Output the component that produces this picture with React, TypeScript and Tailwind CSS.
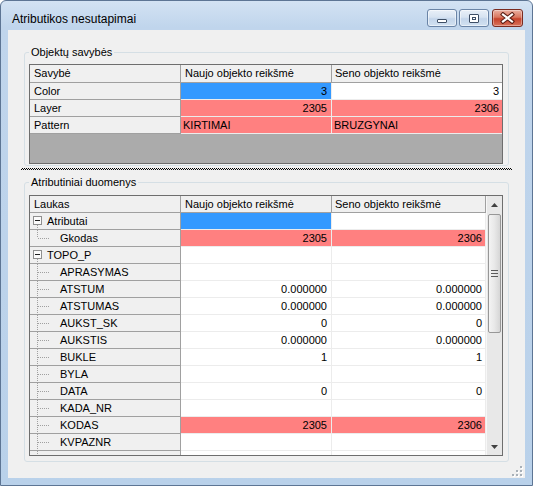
import React from 'react'

type PropRow = {
  name: string
  next: string
  prev: string
  nextBg: string
  prevBg: string
  right: boolean
}

const PINK = 'bg-[#ff8080]'
const BLUE = 'bg-[#3399ff]'

const propRows: PropRow[] = [
  { name: 'Color', next: '3', prev: '3', nextBg: BLUE, prevBg: 'bg-white', right: true },
  { name: 'Layer', next: '2305', prev: '2306', nextBg: PINK, prevBg: PINK, right: true },
  { name: 'Pattern', next: 'KIRTIMAI', prev: 'BRUZGYNAI', nextBg: PINK, prevBg: PINK, right: false },
]

type AttrRow = {
  label: string
  group?: boolean
  last?: boolean
  next?: string
  prev?: string
  nextBg?: string
  prevBg?: string
}

const attrRows: AttrRow[] = [
  { label: 'Atributai', group: true, nextBg: BLUE },
  { label: 'Gkodas', last: true, next: '2305', prev: '2306', nextBg: PINK, prevBg: PINK },
  { label: 'TOPO_P', group: true },
  { label: 'APRASYMAS' },
  { label: 'ATSTUM', next: '0.000000', prev: '0.000000' },
  { label: 'ATSTUMAS', next: '0.000000', prev: '0.000000' },
  { label: 'AUKST_SK', next: '0', prev: '0' },
  { label: 'AUKSTIS', next: '0.000000', prev: '0.000000' },
  { label: 'BUKLE', next: '1', prev: '1' },
  { label: 'BYLA' },
  { label: 'DATA', next: '0', prev: '0' },
  { label: 'KADA_NR' },
  { label: 'KODAS', next: '2305', prev: '2306', nextBg: PINK, prevBg: PINK },
  { label: 'KVPAZNR' },
  { label: 'MEDZIAGA' },
]

function CaptionButton({ kind }: { kind: 'min' | 'max' | 'close' }) {
  if (kind === 'close') {
    return (
      <div className="flex h-[18px] w-[31px] items-center justify-center rounded-[3px] border border-[#7a2b20] bg-[linear-gradient(#eab0a2,#d9765f_45%,#c6422b_55%,#d8745c)] shadow-[inset_0_0_0_1px_rgba(255,255,255,0.35)]">
        <svg width="15" height="12" viewBox="0 0 15 12">
          <path d="M3 2.5 L12 9.5 M12 2.5 L3 9.5" stroke="#5a1d14" strokeWidth="4.2" strokeLinecap="square" />
          <path d="M3 2.5 L12 9.5 M12 2.5 L3 9.5" stroke="#ffffff" strokeWidth="2.2" strokeLinecap="square" />
        </svg>
      </div>
    )
  }
  return (
    <div className="flex h-[18px] w-[30px] items-center justify-center rounded-[3px] border border-[#6a84a6] bg-[linear-gradient(#e9f0f8,#d7e3f1_45%,#c3d5ea_55%,#d2e1f1)] shadow-[inset_0_0_0_1px_rgba(255,255,255,0.5)]">
      {kind === 'min' ? (
        <div className="mt-[5px] h-[4px] w-[10px] rounded-[1px] border border-[#3e4f66] bg-white" />
      ) : (
        <div className="flex h-[9px] w-[10px] items-center justify-center rounded-[1px] border border-[#3e4f66] bg-white">
          <div className="h-[3px] w-[4px] border border-[#3e4f66]" />
        </div>
      )}
    </div>
  )
}

function TitleBar() {
  return (
    <div className="flex h-[29px] shrink-0 items-start justify-between pl-[11px] pr-[9px]">
      <div className="pt-[11px] text-[12px] leading-[15px]">Atributikos nesutapimai</div>
      <div className="mt-[8px] flex">
        <CaptionButton kind="min" />
        <div className="ml-[2px]">
          <CaptionButton kind="max" />
        </div>
        <div className="ml-[3px]">
          <CaptionButton kind="close" />
        </div>
      </div>
    </div>
  )
}

function TreeGlyph({ group, last }: { group?: boolean; last?: boolean }) {
  if (group) {
    return (
      <svg width="17" height="16" className="shrink-0">
        <rect x="3.5" y="3.5" width="8" height="8" fill="#fbfbfb" stroke="#8f8f8f" />
        <rect x="5" y="7" width="5" height="1" fill="#1e1e1e" />
        <line x1="7.5" y1="12" x2="7.5" y2="16" stroke="#a0a0a0" strokeDasharray="1 1" />
      </svg>
    )
  }
  return (
    <svg width="30" height="16" className="shrink-0">
      <line x1="7.5" y1="0" x2="7.5" y2={last ? 8 : 16} stroke="#a0a0a0" strokeDasharray="1 1" />
      <line x1="8" y1="8.5" x2="20" y2="8.5" stroke="#a0a0a0" strokeDasharray="1 1" />
    </svg>
  )
}

function ScrollBar() {
  return (
    <div className="flex w-[16px] shrink-0 flex-col border-l border-[#f7f7f7] bg-[#e8e8e8]">
      <div className="flex h-[17px] shrink-0 items-center justify-center">
        <svg width="7" height="4">
          <path d="M3.5 0 L7 4 L0 4 Z" fill="#404040" />
        </svg>
      </div>
      <div className="mx-[1px] mt-[1px] flex h-[119px] shrink-0 items-center justify-center rounded-[2px] border border-[#979797] bg-[linear-gradient(90deg,#f4f4f4,#e8e8e8_50%,#d6d6d6)]">
        <svg width="7" height="7">
          <rect x="0" y="0" width="7" height="1" fill="#5a5a5a" />
          <rect x="0" y="3" width="7" height="1" fill="#5a5a5a" />
          <rect x="0" y="6" width="7" height="1" fill="#5a5a5a" />
        </svg>
      </div>
      <div className="flex-1" />
      <div className="flex h-[17px] shrink-0 items-center justify-center">
        <svg width="7" height="4">
          <path d="M0 0 L7 0 L3.5 4 Z" fill="#404040" />
        </svg>
      </div>
    </div>
  )
}

function PropertiesGrid() {
  return (
    <div className="w-[474px] border border-[#6e6e6e] bg-[#ababab]">
      <div className="flex h-[18px] bg-[#f0f0f0] leading-[17px]">
        <div className="w-[151px] border-b border-r border-[#a0a0a0] pl-[4px]">Savybė</div>
        <div className="w-[151px] border-b border-r border-[#a0a0a0] pl-[4px]">Naujo objekto reikšmė</div>
        <div className="flex-1 border-b border-[#a0a0a0] pl-[3px]">Seno objekto reikšmė</div>
      </div>
      {propRows.map(r => (
        <div key={r.name} className="flex h-[17px] leading-[16px]">
          <div className="w-[151px] border-b border-r border-[#a0a0a0] bg-[#f0f0f0] pl-[4px]">{r.name}</div>
          <div
            className={`w-[151px] border-b border-r border-[#ececec] ${r.nextBg} ${
              r.right ? 'pr-[4px] text-right' : 'pl-[2px]'
            }`}
          >
            {r.next}
          </div>
          <div className={`flex-1 border-b border-[#ececec] ${r.prevBg} ${r.right ? 'pr-[3px] text-right' : 'pl-[2px]'}`}>
            {r.prev}
          </div>
        </div>
      ))}
      <div className="h-[29px]" />
    </div>
  )
}

function AttributesGrid() {
  return (
    <div className="flex h-[261px] w-[474px] border border-[#6e6e6e] bg-white">
      <div className="flex flex-1 flex-col overflow-hidden">
        <div className="flex h-[17px] shrink-0 bg-[#f0f0f0] leading-[16px]">
          <div className="w-[151px] border-b border-r border-[#a0a0a0] pl-[4px]">Laukas</div>
          <div className="w-[151px] border-b border-r border-[#a0a0a0] pl-[4px]">Naujo objekto reikšmė</div>
          <div className="flex-1 border-b border-r border-[#a0a0a0] pl-[3px]">Seno objekto reikšmė</div>
        </div>
        {attrRows.map(r => (
          <div key={r.label} className="flex h-[17px] shrink-0 leading-[16px]">
            <div className="flex w-[151px] border-b border-r border-[#a0a0a0] bg-[#f0f0f0]">
              <TreeGlyph group={r.group} last={r.last} />
              <span>{r.label}</span>
            </div>
            <div className={`w-[151px] border-b border-r border-[#ececec] pr-[4px] text-right ${r.nextBg ?? 'bg-white'}`}>
              {r.next}
            </div>
            <div className={`flex-1 border-b border-r border-[#ececec] pr-[3px] text-right ${r.prevBg ?? 'bg-white'}`}>
              {r.prev}
            </div>
          </div>
        ))}
      </div>
      <ScrollBar />
    </div>
  )
}

function ResizeGrip() {
  const dots = [
    [8, 0],
    [4, 4],
    [8, 4],
    [0, 8],
    [4, 8],
    [8, 8],
  ]
  return (
    <svg width="11" height="11" className="absolute bottom-[1px] right-[2px]">
      {dots.map(([x, y]) => (
        <g key={`${x}-${y}`}>
          <rect x={x + 1} y={y + 1} width="2" height="2" fill="#ffffff" />
          <rect x={x} y={y} width="2" height="2" fill="#a8b0b8" />
        </g>
      ))}
    </svg>
  )
}

export default function App() {
  return (
    <div className="h-[486px] w-[533px] font-['Liberation_Sans',Arial,sans-serif] text-[11px] text-black">
      <div className="flex h-full flex-col rounded-t-[6px] border border-[#5d7594] bg-[linear-gradient(#d3e2f3,#c0d5ec_26px,#b9d1ea)]">
        <TitleBar />
        <div className="relative mx-[7px] flex h-[448px] flex-col bg-[#f0f0f0]">
          {/* Objektų savybės */}
          <fieldset className="mx-[16px] mt-[16px] rounded-[3px] border border-[#d5dfe5]">
            <legend className="ml-[4px] px-[2px] leading-[13px]">Objektų savybės</legend>
            <div className="pb-[1px] pl-[4px] pt-[5px]">
              <PropertiesGrid />
            </div>
          </fieldset>

          {/* splitter */}
          <div className="mx-[13px] mt-[2px] h-[2px] bg-[conic-gradient(#000_25%,transparent_0_50%,#000_0_75%,transparent_0)] bg-[length:2px_2px]" />

          {/* Atributiniai duomenys */}
          <fieldset className="mx-[16px] mt-[6px] rounded-[3px] border border-[#d5dfe5]">
            <legend className="ml-[4px] px-[2px] leading-[13px]">Atributiniai duomenys</legend>
            <div className="pb-[5px] pl-[4px] pt-[6px]">
              <AttributesGrid />
            </div>
          </fieldset>

          <ResizeGrip />
        </div>
      </div>
    </div>
  )
}
